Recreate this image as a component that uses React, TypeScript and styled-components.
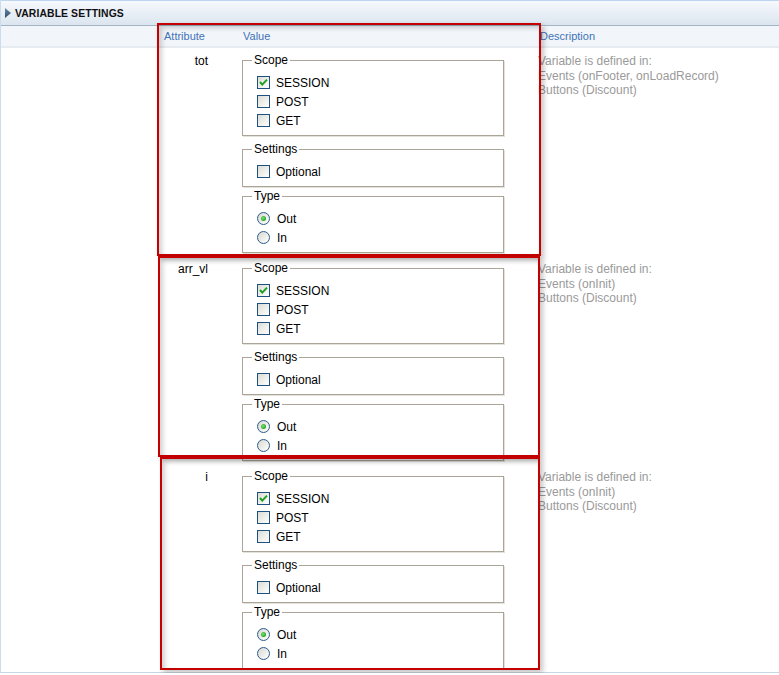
import styled, { createGlobalStyle } from "styled-components";

const GlobalStyle = createGlobalStyle`
    html, body {
        margin: 0;
        padding: 0;
        background: #ffffff;
    }
    body {
        font-family: "Liberation Sans", Arial, sans-serif;
        color: #000;
    }
`;

const Panel = styled.div`
    position: relative;
    width: 779px;
    box-sizing: border-box;
    border-left: 1px solid #cbdcec;
    border-bottom: 1px solid #c8d5e2;
`;

const TitleBar = styled.div`
    height: 24px;
    display: flex;
    align-items: center;
    gap: 4px;
    padding-left: 4px;
    border-top: 1px solid #bdd5ee;
    border-bottom: 1px solid #a3b4c6;
    background: linear-gradient(to bottom, #f6f9fc 0%, #e9eff6 50%, #dbe5ef 100%);
`;

const Title = styled.span`
    font-size: 10.4px;
    font-weight: bold;
    color: #111;
    letter-spacing: 0.1px;
`;

const ColumnHeader = styled.div`
    display: grid;
    grid-template-columns: 79px 297px 1fr;
    align-items: center;
    height: 20px;
    padding-left: 163px;
    background: #f2f6fb;
    border-bottom: 2px solid #e6ebf1;
`;

const HeadCell = styled.span`
    font-size: 11px;
    color: #3f72b6;
`;

const VariableRow = styled.div`
    display: grid;
    grid-template-columns: 207px 262px 1fr;
    column-gap: 34px;
    padding: 5px 0 3px;
`;

const AttrName = styled.div`
    text-align: right;
    font-size: 12px;
    line-height: 14px;
    padding-top: 1px;
`;

const Groups = styled.div`
    display: flex;
    flex-direction: column;
`;

const Group = styled.fieldset<{ $top: number }>`
    margin: ${(p) => p.$top}px 0 0 0;
    padding: 6px 9px 5px;
    border: 1px solid #a9a699;
    box-shadow: 1px 1px 0 #e4e2da, inset 1px 1px 0 #ffffff;
    min-width: 0;
`;

const Legend = styled.legend`
    padding: 0 2px;
    font-size: 12px;
    line-height: 14px;
`;

const Option = styled.div`
    display: flex;
    align-items: center;
    gap: 6px;
    height: 19px;
    padding-left: 5px;
    font-size: 12px;
`;

const Box = styled.span`
    width: 11px;
    height: 11px;
    border: 1px solid #1c5180;
    background: linear-gradient(135deg, #dcdcd6 0%, #f1f1ee 60%, #ffffff 100%);
    display: flex;
    align-items: center;
    justify-content: center;
`;

const Round = styled.span`
    width: 11px;
    height: 11px;
    border: 1px solid #2a5b8c;
    border-radius: 50%;
    background: linear-gradient(135deg, #d8d8d2 0%, #f0f0ec 60%, #ffffff 100%);
    display: flex;
    align-items: center;
    justify-content: center;
    margin-right: 1px;
`;

const Dot = styled.span`
    width: 5px;
    height: 5px;
    border-radius: 50%;
    background: radial-gradient(circle at 40% 40%, #7be07b 0%, #2fae2f 60%, #1e8c1e 100%);
`;

const Description = styled.div`
    font-size: 12px;
    line-height: 14.5px;
    color: #9a9a9a;
    padding-top: 1px;
`;

const Highlight = styled.div<{ $x: number; $y: number; $w: number; $h: number }>`
    position: absolute;
    left: ${(p) => p.$x}px;
    top: ${(p) => p.$y}px;
    width: ${(p) => p.$w}px;
    height: ${(p) => p.$h}px;
    box-sizing: border-box;
    border: 2px solid #c40000;
    box-shadow: 3px 3px 5px rgba(0, 0, 0, 0.22), inset 3px 3px 5px rgba(0, 0, 0, 0.18);
    pointer-events: none;
`;

function Arrow() {
    return (
        <svg width="6" height="10" viewBox="0 0 6 10">
            <defs>
                <linearGradient id="arr" x1="0" y1="0" x2="0" y2="1">
                    <stop offset="0" stopColor="#6f8aa6" />
                    <stop offset="1" stopColor="#2d4d6e" />
                </linearGradient>
            </defs>
            <path d="M0 0 L6 5 L0 10 Z" fill="url(#arr)" />
        </svg>
    );
}

function Checkbox({ checked }: { checked?: boolean }) {
    return (
        <Box>
            {checked && (
                <svg width="9" height="9" viewBox="0 0 9 9">
                    <path d="M1 4 L3.3 6.6 L8 1.6" stroke="#21a121" strokeWidth="2" fill="none" />
                </svg>
            )}
        </Box>
    );
}

function Radio({ checked }: { checked?: boolean }) {
    return <Round>{checked && <Dot />}</Round>;
}

interface Variable {
    name: string;
    events: string;
}

const variables: Variable[] = [
    { name: "tot", events: "Events (onFooter, onLoadRecord)" },
    { name: "arr_vl", events: "Events (onInit)" },
    { name: "i", events: "Events (onInit)" },
];

function App() {
    return (
        <>
            <GlobalStyle />
            <Panel>
                <TitleBar>
                    <Arrow />
                    <Title>VARIABLE SETTINGS</Title>
                </TitleBar>
                <ColumnHeader>
                    <HeadCell>Attribute</HeadCell>
                    <HeadCell>Value</HeadCell>
                    <HeadCell>Description</HeadCell>
                </ColumnHeader>
                {variables.map((v) => (
                    <VariableRow key={v.name}>
                        <AttrName>{v.name}</AttrName>
                        <Groups>
                            <Group $top={0}>
                                <Legend>Scope</Legend>
                                <Option><Checkbox checked />SESSION</Option>
                                <Option><Checkbox />POST</Option>
                                <Option><Checkbox />GET</Option>
                            </Group>
                            <Group $top={6}>
                                <Legend>Settings</Legend>
                                <Option><Checkbox />Optional</Option>
                            </Group>
                            <Group $top={2}>
                                <Legend>Type</Legend>
                                <Option><Radio checked />Out</Option>
                                <Option><Radio />In</Option>
                            </Group>
                        </Groups>
                        <Description>
                            Variable is defined in:<br />
                            {v.events}<br />
                            Buttons (Discount)
                        </Description>
                    </VariableRow>
                ))}
                <Highlight $x={156} $y={23} $w={384} $h={233} />
                <Highlight $x={157} $y={256} $w={382} $h={201} />
                <Highlight $x={159} $y={457} $w={380} $h={213} />
            </Panel>
        </>
    );
}

export default App;
